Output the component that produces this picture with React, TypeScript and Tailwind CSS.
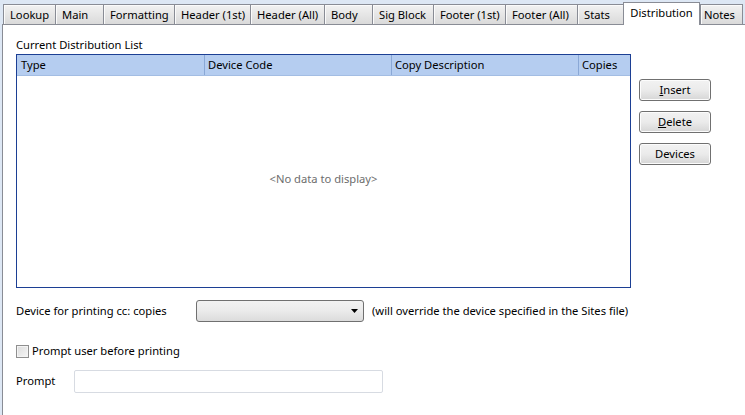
import React from 'react';

const tabs: { label: string; w: string; active?: boolean }[] = [
  { label: 'Lookup', w: 'w-[52px]' },
  { label: 'Main', w: 'w-[48px]' },
  { label: 'Formatting', w: 'w-[71px]' },
  { label: 'Header (1st)', w: 'w-[76px]' },
  { label: 'Header (All)', w: 'w-[74px]' },
  { label: 'Body', w: 'w-[48px]' },
  { label: 'Sig Block', w: 'w-[61px]' },
  { label: 'Footer (1st)', w: 'w-[72px]' },
  { label: 'Footer (All)', w: 'w-[72px]' },
  { label: 'Stats', w: 'w-[46px]' },
  { label: 'Distribution', w: 'w-[77px]', active: true },
  { label: 'Notes', w: 'w-[43px]' },
];

const Button: React.FC<{ children: React.ReactNode }> = ({ children }) => (
  <button className="w-[72px] h-[22px] rounded-[3px] border border-[#707070] bg-gradient-to-b from-[#f2f2f2] via-[#ebebeb] to-[#d6d6d6] text-[11.2px] text-black leading-none shadow-[inset_0_0_0_1px_#fcfcfc]">
    {children}
  </button>
);

const App: React.FC = () => {
  return (
    <div
      className="w-[745px] h-[415px] overflow-hidden bg-[#dde7f4] flex flex-col text-[11.2px] text-black"
      style={{ fontFamily: '"Noto Sans", "Open Sans", sans-serif' }}
    >
      {/* Tab strip */}
      <div className="h-[24px] flex items-end pl-[3px] shrink-0 relative z-10">
        {tabs.map((t) =>
          t.active ? (
            <div
              key={t.label}
              className={`${t.w} h-[23px] -mb-px bg-white border border-b-0 border-[#898c95] flex items-start justify-center pt-[3px] leading-[14px] whitespace-nowrap`}
            >
              {t.label}
            </div>
          ) : (
            <div
              key={t.label}
              className={`${t.w} h-[20px] bg-gradient-to-b from-[#f2f2f2] to-[#dadada] border-l border-t last:border-r last:pl-[3px] border-[#898c95] flex items-center justify-start pl-[6px] leading-[14px] whitespace-nowrap shadow-[inset_1px_1px_0_#fbfbfb]`}
            >
              {t.label}
            </div>
          )
        )}
      </div>

      {/* Page */}
      <div className="flex-1 ml-[2px] bg-white border-l border-t border-[#898c95] flex flex-col pl-[13px] pt-[13px]">
        <div className="leading-[14px] mb-[2px]">Current Distribution List</div>

        <div className="flex items-start">
          <div className="w-[615px] h-[234px] border border-[#1c3f94] flex flex-col">
            <div className="h-[21px] bg-[#b5cdf0] border-b border-[#a3bde3] flex items-center">
              <div className="w-[188px] pl-[4px] border-r border-[#8aa8d6] h-full flex items-center">Type</div>
              <div className="w-[187px] pl-[3px] border-r border-[#8aa8d6] h-full flex items-center">Device Code</div>
              <div className="w-[187px] pl-[3px] border-r border-[#8aa8d6] h-full flex items-center">Copy Description</div>
              <div className="flex-1 pl-[3px] h-full flex items-center">Copies</div>
            </div>
            <div className="flex-1 flex items-center justify-center text-[#6d6d6d] pb-[4px]">
              &lt;No data to display&gt;
            </div>
          </div>

          <div className="ml-[8px] mt-[25px] flex flex-col gap-[10px]">
            <Button>
              <span className="underline">I</span>nsert
            </Button>
            <Button>
              <span className="underline">D</span>elete
            </Button>
            <Button>Devices</Button>
          </div>
        </div>

        <div className="flex items-center mt-[12px] h-[22px]">
          <div className="w-[180px]">Device for printing cc: copies</div>
          <div className="w-[168px] h-[22px] rounded-[3px] border border-[#707070] bg-gradient-to-b from-[#f2f2f2] via-[#ebebeb] to-[#dcdcdc] flex items-center justify-end pr-[5px]">
            <svg width="7" height="4" viewBox="0 0 7 4">
              <path d="M0 0h7L3.5 4z" fill="#000" />
            </svg>
          </div>
          <div className="ml-[8px]">(will override the device specified in the Sites file)</div>
        </div>

        <div className="flex items-center mt-[22px] h-[14px]">
          <div className="w-[13px] h-[13px] border border-[#8f8f8f] bg-gradient-to-br from-[#dcdcdc] to-[#f6f6f6] shadow-[inset_0_0_0_1px_#f4f4f4]" />
          <span className="ml-[3px]">Prompt user before printing</span>
        </div>

        <div className="flex items-center mt-[12px] h-[23px]">
          <div className="w-[58px]">Prompt</div>
          <div className="w-[309px] h-[23px] rounded-[2px] border border-[#d7dbe2] bg-white" />
        </div>
      </div>
    </div>
  );
};

export default App;
